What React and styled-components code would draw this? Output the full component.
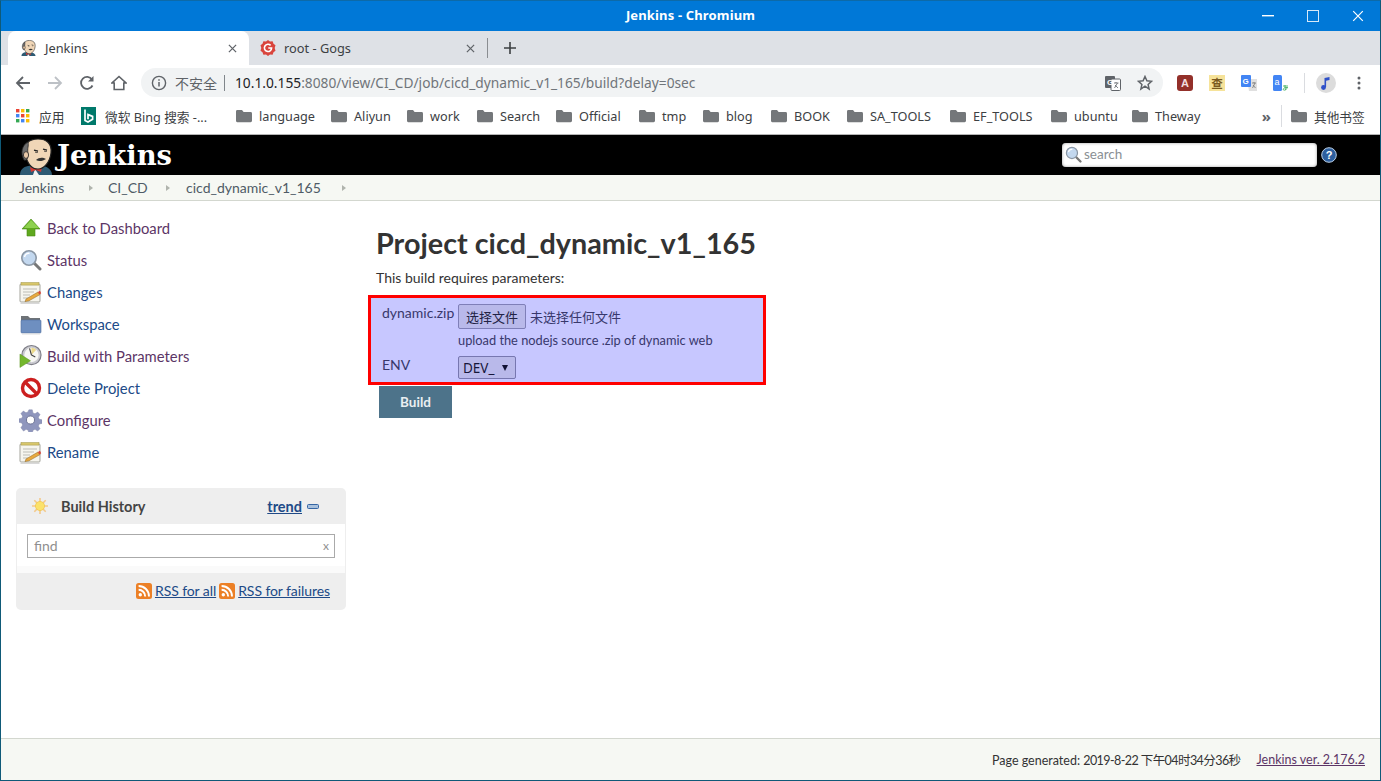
import React from 'react';
import styled, { createGlobalStyle } from 'styled-components';

const GlobalStyle = createGlobalStyle`
  html, body { margin: 0; padding: 0; background: #fff; }
  * { box-sizing: border-box; }
`;

const chromeFont = `"Noto Sans", "Noto Sans CJK SC", sans-serif`;
const pageFont = `Lato, "Noto Sans CJK SC", sans-serif`;

const Win = styled.div`
  width: 1381px;
  height: 781px;
  display: flex;
  flex-direction: column;
  overflow: hidden;
  border: 1px solid #0f5a78;
  border-top-color: #0d6aa8;
`;

const TitleBar = styled.div`
  height: 30px;
  flex: none;
  background: #0078d7;
  color: #fff;
  font: 700 13px ${chromeFont};
  letter-spacing: 0.15px;
  display: flex;
  align-items: center;
  position: relative;
  justify-content: center;
  padding: 0 0 2px 0;
`;

const WinButtons = styled.div`
  position: absolute;
  right: 0;
  top: 0;
  height: 30px;
  display: flex;
  align-items: center;
`;

const WinBtn = styled.div`
  width: 45px;
  display: flex;
  justify-content: center;
`;

const TabStrip = styled.div`
  height: 34px;
  flex: none;
  background: #dee1e6;
  display: flex;
  align-items: stretch;
  padding-left: 7px;
  font: 12.8px ${chromeFont};
  color: #3c4043;
`;

const Tab = styled.div`
  width: ${p => p.$w}px;
  display: flex;
  align-items: center;
  padding: 0 12px 0 ${p => p.$pad}px;
  background: ${p => (p.$active ? '#fff' : 'transparent')};
  border-radius: 8px 8px 0 0;
  gap: ${p => p.$gap}px;
`;

const TabClose = styled.span`
  margin-left: auto;
  display: flex;
`;

const TabSep = styled.div`
  width: 1px;
  height: 20px;
  align-self: center;
  background: #8a8d91;
`;

const NewTab = styled.div`
  width: 44px;
  display: flex;
  align-items: center;
  justify-content: center;
`;

const Toolbar = styled.div`
  height: 32px;
  flex: none;
  display: flex;
  align-items: center;
  padding: 3px 0 0 6px;
`;

const NavBtn = styled.div`
  width: 32px;
  display: flex;
  justify-content: center;
`;

const Omnibox = styled.div`
  margin-left: 6px;
  width: 1022px;
  height: 29px;
  border-radius: 15px;
  background: #f1f3f4;
  display: flex;
  align-items: center;
  padding: 0 8px 0 10px;
  font: 14px ${chromeFont};
  color: #3c4043;
  white-space: nowrap;
`;

const Insecure = styled.span`
  margin-left: 8px;
  color: #5f6368;
`;

const UrlSep = styled.span`
  width: 1px;
  height: 16px;
  background: #80868b;
  margin: 0 10px 0 7px;
`;

const UrlHost = styled.span`
  color: #202124;
  font-size: 13.75px;
`;

const UrlRest = styled.span`
  color: #70757a;
  font-size: 13.75px;
`;

const OmniRight = styled.div`
  margin-left: auto;
  display: flex;
  align-items: center;
  gap: 16px;
  padding-right: 2px;
`;

const Extensions = styled.div`
  display: flex;
  align-items: center;
  margin-left: 14px;
  gap: 16px;
`;

const ExtSep = styled.div`
  width: 1px;
  height: 20px;
  background: #dadce0;
  margin: 0 -1px;
`;

const Avatar = styled.span`
  display: flex;
  margin: 0 5px 0 -4px;
`;

const Bookmarks = styled.div`
  height: 38px;
  flex: none;
  display: flex;
  align-items: center;
  padding: 1px 0 0 15px;
  border-bottom: 1px solid #b4b4b4;
  font: 12.7px ${chromeFont};
  color: #3c4043;
  white-space: nowrap;
`;

const Bookmark = styled.div`
  width: ${p => p.$w}px;
  flex: none;
  display: flex;
  align-items: center;
  gap: ${p => p.$gap || 7}px;
`;

const BookmarkEnd = styled.div`
  margin-left: auto;
  display: flex;
  align-items: center;
  padding-right: 14px;
`;

const More = styled.span`
  font-size: 15px;
  font-weight: 700;
  color: #5f6368;
  margin-right: 10px;
`;

const BookSep = styled.div`
  width: 1px;
  height: 22px;
  background: #dadce0;
  margin-right: 9px;
`;

const JHeader = styled.div`
  height: 40px;
  flex: none;
  background: #000;
  display: flex;
  align-items: flex-end;
  padding-left: 18px;
  overflow: hidden;
`;

const LogoText = styled.span`
  font: 700 27.4px "DejaVu Serif", serif;
  color: #fff;
  align-self: center;
  margin: 0 0 1px 4px;
`;

const SearchWrap = styled.div`
  margin-left: auto;
  align-self: center;
  display: flex;
  align-items: center;
  gap: 4px;
  padding: 0 43px 1px 0;
`;

const SearchBox = styled.div`
  width: 255px;
  height: 24px;
  background: #fff;
  border-radius: 4px;
  box-shadow: inset 0 0 3px #999;
  display: flex;
  align-items: center;
  padding-left: 3px;
  gap: 2px;
  font: 13.5px ${pageFont};
  color: #8a8f94;
`;

const SearchHint = styled.span`
  margin-top: -2px;
`;

const Crumbs = styled.div`
  height: 26px;
  flex: none;
  background: #f6f8f3;
  border-bottom: 1px solid #d3d7cf;
  display: flex;
  align-items: center;
  padding-left: 18px;
  font: 14px ${pageFont};
  color: #4f5b66;
`;

const Crumb = styled.span`
  width: ${p => p.$w}px;
  flex: none;
`;

const CrumbArrow = styled.span`
  width: 0;
  height: 0;
  flex: none;
  border-left: 4px solid #b0b4ad;
  border-top: 3.5px solid transparent;
  border-bottom: 3.5px solid transparent;
  margin-right: ${p => p.$mr}px;
`;

const Body = styled.div`
  flex: 1;
  display: flex;
  min-height: 0;
  font: 14.5px ${pageFont};
  color: #333;
`;

const Side = styled.div`
  width: 358px;
  flex: none;
  padding-top: 11px;
`;

const Task = styled.div`
  height: 32px;
  display: flex;
  align-items: center;
  padding-left: 18px;
  gap: 5px;
  font-size: 14.8px;
  color: ${p => (p.$visited ? '#5c3566' : '#204a87')};
`;

const TaskIcon = styled.span`
  width: 23px;
  height: 24px;
  flex: none;
  display: flex;
  align-items: center;
  justify-content: center;
`;

const History = styled.div`
  margin: 20px 0 0 15px;
  width: 330px;
  height: 122px;
  background: #eee;
  border-radius: 5px;
  display: flex;
  flex-direction: column;
`;

const HistoryHead = styled.div`
  height: 36px;
  flex: none;
  display: flex;
  align-items: center;
  padding: 0 27px 0 16px;
  font-weight: 700;
  font-size: 14.5px;
  color: #444;
`;

const HistoryTitle = styled.span`
  margin-left: 13px;
`;

const Trend = styled.span`
  margin-left: auto;
  color: #204a87;
  text-decoration: underline;
  margin-right: 5px;
`;

const HistoryBody = styled.div`
  height: 49px;
  flex: none;
  background: #fff;
  margin: 0 1px;
  padding: 10px 10px 0;
  border-bottom: 7px solid #fafafa;
`;

const FindBox = styled.div`
  height: 24px;
  border: 1px solid #aaa;
  background: #fff;
  display: flex;
  justify-content: space-between;
  align-items: center;
  padding: 0 5px 2px 6px;
  color: #8f8f8f;
  font-size: 14px;
`;

const FindX = styled.span`
  font-size: 12px;
`;

const HistoryFoot = styled.div`
  flex: 1;
  display: flex;
  align-items: center;
  justify-content: flex-end;
  padding: 0 16px 2px 0;
  gap: 3px;
  font-size: 14px;
  letter-spacing: -0.08px;
  color: #204a87;
`;

const RssLink = styled.span`
  display: flex;
  align-items: center;
  gap: 3px;
  & > span { text-decoration: underline; }
`;

const Main = styled.div`
  flex: 1;
  padding: 25px 0 0 17px;
`;

const Title = styled.h1`
  margin: 0;
  font: 700 28.8px/34px ${pageFont};
  color: #333;
`;

const Lead = styled.p`
  margin: 8px 0 0;
  font-size: 14px;
  line-height: 20px;
`;

const ParamBox = styled.div`
  margin: 7px 0 0 -8px;
  width: 398px;
  height: 90px;
  border: 3px solid #f00;
  background: #c7c7ff;
  padding: 6px 0 0 11px;
  color: #38386c;
  display: grid;
  grid-template-columns: 76px 1fr;
  grid-template-rows: 25px 27px 24px;
  font-size: 14px;
`;

const ParamLabel = styled.div`
  white-space: nowrap;
`;

const FileRow = styled.div`
  display: flex;
  align-items: center;
  gap: 4px;
  font-family: "Noto Sans CJK SC", sans-serif;
  font-size: 13px;
`;

const FileBtn = styled.div`
  width: 68px;
  height: 25px;
  border: 1px solid #7f7fb8;
  border-radius: 2px;
  background: #b9b9ea;
  color: #222244;
  display: flex;
  align-items: center;
  justify-content: center;
  padding-bottom: 1px;
`;

const Hint = styled.div`
  font-size: 12.8px;
  padding-top: 3px;
`;

const Select = styled.div`
  width: 58px;
  height: 23px;
  border: 1px solid #7777b0;
  border-radius: 2px;
  background: #b9b9ea;
  color: #16163a;
  display: flex;
  align-items: center;
  justify-content: space-between;
  padding: 0 5px 0 4px;
  font-family: "Noto Sans", sans-serif;
  font-size: 13.5px;
`;

const SelectArrow = styled.span`
  width: 0;
  height: 0;
  border-top: 6px solid #111133;
  border-left: 3.5px solid transparent;
  border-right: 3.5px solid transparent;
  margin-right: 2px;
`;

const BuildBtn = styled.div`
  margin: 1px 0 0 3px;
  width: 73px;
  height: 32px;
  background: #4d738a;
  color: #e9eef1;
  font-weight: 700;
  font-size: 13.5px;
  display: flex;
  align-items: center;
  justify-content: center;
`;

const Footer = styled.div`
  height: 42px;
  flex: none;
  background: #f6f8f3;
  border-top: 1px solid #d3d7cf;
  display: flex;
  align-items: center;
  justify-content: flex-end;
  padding-right: 15px;
  gap: 16px;
  font: 12.5px ${pageFont};
  color: #333;
`;

const Stamp = styled.span`
  letter-spacing: -0.57px;
`;

const VerLink = styled.span`
  color: #5c3566;
  text-decoration: underline;
`;

/* drawings */

const JenkinsHead = ({ size = 34 }) => (
  <svg width={size} height={size * 1.09} viewBox="0 0 34 37">
    <path d="M1 37c0-5 3-8 8-9l8-1c8 0 16 3 16 10z" fill="#2d5a73" />
    <path d="M14 37l2-6 4 6z" fill="#f2f2f2" />
    <path d="M11 29l6 2 6-2-1 5-5-2-5 2z" fill="#d33833" />
    <path d="M6 16C4 6 10 1 19 1s14 5 13 14c-1 9-7 16-13 16-7 0-11-7-13-15z" fill="#f0d6b7" stroke="#222" strokeWidth="1.2" />
    <path d="M5 22C1 15 3 7 9 4c1 4-1 6 0 12 0 4-1 7-4 6z" fill="#6d6d6d" stroke="#222" strokeWidth=".8" />
    <ellipse cx="7" cy="17" rx="2.6" ry="3.4" fill="#e8c8a8" stroke="#222" strokeWidth=".8" />
    <path d="M15 12l4 1M24 11l4 1" stroke="#222" strokeWidth="1.3" fill="none" />
    <path d="M16 14q2 1 3 0M25 13q2 1 3 0" stroke="#222" strokeWidth=".8" fill="none" />
    <path d="M17 22c3-3 7-3 10-1-3 2-7 3-10 1z" fill="#333" />
  </svg>
);

const Cross = ({ size = 9, color = '#5f6368', w = 1.4 }) => (
  <svg width={size} height={size} viewBox="0 0 10 10">
    <path d="M1 1l8 8M9 1l-8 8" stroke={color} strokeWidth={w} />
  </svg>
);

const GogsIcon = () => (
  <svg width="16" height="16" viewBox="0 0 16 16">
    <path d="M8 0l2 1.5 2.6-.2.9 2.4 2 1.6-.8 2.7.8 2.7-2 1.6-.9 2.4-2.6-.2L8 16l-2-1.5-2.6.2-.9-2.4-2-1.6.8-2.7L.5 5.3l2-1.6.9-2.4 2.6.2z" fill="#d9453d" />
    <path d="M10.6 5.4A3.6 3.6 0 1 0 11.6 8H8.3" fill="none" stroke="#fff" strokeWidth="1.6" />
  </svg>
);

const Folder = () => (
  <svg width="16" height="14" viewBox="0 0 16 14">
    <path d="M1.5 1h4.5l1.6 2h7a1.4 1.4 0 0 1 1.4 1.4v7.4a1.4 1.4 0 0 1-1.4 1.4h-13A1.4 1.4 0 0 1 0 11.8V2.4A1.4 1.4 0 0 1 1.5 1z" fill="#74777a" />
  </svg>
);

const Apps = () => {
  const colors = ['#ea4335', '#fbbc05', '#34a853', '#4285f4', '#ea4335', '#fbbc05', '#34a853', '#4285f4', '#fbbc05'];
  return (
    <svg width="14" height="14" viewBox="0 0 14 14">
      {colors.map((c, i) => (
        <rect key={i} x={(i % 3) * 5} y={Math.floor(i / 3) * 5} width="3.4" height="3.4" fill={c} />
      ))}
    </svg>
  );
};

const BingIcon = () => (
  <svg width="15" height="18" viewBox="0 0 15 18">
    <rect width="15" height="18" fill="#00796b" />
    <path d="M4 2.5v11l3 1.6 4.6-2.8V9.4L7 7.6v4.6" fill="none" stroke="#fff" strokeWidth="1.7" />
  </svg>
);

const UpArrow = () => (
  <svg width="20" height="20" viewBox="0 0 20 20">
    <path d="M10 1L1 11h5v7h8v-7h5z" fill="#5fa81e" stroke="#4a8c16" strokeWidth=".6" />
    <path d="M10 2L3 10h15z" fill="#8ed14f" />
  </svg>
);

const Magnifier = ({ size = 22 }) => (
  <svg width={size} height={size} viewBox="0 0 22 22">
    <path d="M13 13l7 7" stroke="#777" strokeWidth="3" strokeLinecap="round" />
    <circle cx="9" cy="9" r="7.2" fill="#c3d8ef" stroke="#8b97a5" strokeWidth="1.6" />
    <path d="M4.5 8a4.5 4.5 0 0 1 5-3.6" stroke="#fff" strokeWidth="1.5" fill="none" />
  </svg>
);

const Notepad = () => (
  <svg width="23" height="23" viewBox="0 0 23 23">
    <rect x="1" y="3" width="20" height="18" rx="1" fill="#f6f5ee" stroke="#a5a59d" />
    <rect x="1.5" y="22" width="19" height="1" fill="#d8d8d8" />
    <rect x="2" y="1.5" width="18" height="2.6" fill="#d8c66a" stroke="#a09548" strokeWidth=".5" />
    <path d="M4 8h14M4 11h11M4 14h7M4 17h5" stroke="#bdbdb5" />
    <path d="M7 18l12-7 2 2.6-11 6.2-4 .8z" fill="#e8a93f" stroke="#8b6420" strokeWidth=".5" />
    <path d="M19 11l2-1.2 1.2 2.4-1.7 1.3z" fill="#d9483b" />
  </svg>
);

const FolderBlue = () => (
  <svg width="22" height="21" viewBox="0 0 22 21">
    <path d="M1 2h7l2 2h10v4H1z" fill="#6e7377" />
    <rect x="1" y="6" width="20" height="13" rx="1" fill="#6e8fc0" stroke="#51709d" strokeWidth=".6" />
    <rect x="2" y="19.5" width="18" height="1" fill="#dedede" />
  </svg>
);

const BuildIcon = () => (
  <svg width="24" height="24" viewBox="0 0 24 24">
    <circle cx="13" cy="11" r="10" fill="#c9c9cf" stroke="#7d7d86" strokeWidth="1.2" />
    <circle cx="13" cy="11" r="7.5" fill="#f7f7f4" />
    <path d="M13 3.5a7.5 7.5 0 0 1 5 2L13 11z" fill="#ecd98a" />
    <path d="M13 11l-2-7M13 11l4 2" stroke="#444" strokeWidth="1.2" />
    <path d="M1 10l11 7-11 7z" fill="#74b72d" stroke="#5a9220" strokeWidth=".5" />
  </svg>
);

const NoIcon = () => (
  <svg width="22" height="22" viewBox="0 0 22 22">
    <circle cx="11" cy="11" r="8.5" fill="#fff" stroke="#cc1f1f" strokeWidth="3.4" />
    <path d="M5 5l12 12" stroke="#cc1f1f" strokeWidth="3.4" />
  </svg>
);

const Gear = () => (
  <svg width="24" height="24" viewBox="0 0 24 24">
    <path d="M10 0h4l.8 3.6 2.4 1 3.1-2 2.8 2.9-2 3.1 1 2.4 3.6.8v4l-3.6.8-1 2.4 2 3.1-2.8 2.8-3.1-2-2.4 1-.8 3.6h-4l-.8-3.6-2.4-1-3.1 2L.7 20.900l2-3.100-1-2.400L-1.900 14.600v-4l3.600-.8 1-2.400-2-3.100L3.500 1.400l3.100 2 2.400-1z" transform="translate(1.400 1.400) scale(.89)" fill="#8f96bd" stroke="#7a80a3" strokeWidth=".5" />
    <circle cx="12" cy="12" r="4.200" fill="#fff" stroke="#6d7394" />
  </svg>
);

const Sun = () => (
  <svg width="16" height="16" viewBox="0 0 16 16">
    <path d="M8 0v16M0 8h16M2.3 2.3l11.4 11.4M13.700 2.300L2.300 13.700" stroke="#f3c98a" strokeWidth="1.6" />
    <circle cx="8" cy="8" r="4.600" fill="#fbe26b" stroke="#f0c040" strokeWidth=".6" />
  </svg>
);

const Rss = () => (
  <svg width="16" height="16" viewBox="0 0 16 16">
    <rect width="16" height="16" rx="2.5" fill="#ec8026" />
    <circle cx="4.3" cy="11.7" r="1.7" fill="#fff" />
    <path d="M2.6 6.8a6.6 6.6 0 0 1 6.6 6.6M2.6 3a10.4 10.4 0 0 1 10.4 10.4" fill="none" stroke="#fff" strokeWidth="1.9" />
  </svg>
);

const HelpIcon = () => (
  <svg width="16" height="16" viewBox="0 0 16 16">
    <circle cx="8" cy="8" r="7.3" fill="#2d5f9e" stroke="#bcd0e6" strokeWidth="1" />
    <text x="8" y="12" textAnchor="middle" fontFamily="Liberation Sans" fontWeight="700" fontSize="11" fill="#fff">?</text>
  </svg>
);

const MinusIcon = () => (
  <svg width="12" height="7" viewBox="0 0 12 7">
    <rect x=".5" y="1.500" width="11" height="4" rx="1" fill="#a8c0dc" stroke="#3465a4" />
  </svg>
);

const tasks = [
  { label: 'Back to Dashboard', icon: <UpArrow />, visited: true },
  { label: 'Status', icon: <Magnifier />, visited: true },
  { label: 'Changes', icon: <Notepad /> },
  { label: 'Workspace', icon: <FolderBlue /> },
  { label: 'Build with Parameters', icon: <BuildIcon />, visited: true },
  { label: 'Delete Project', icon: <NoIcon /> },
  { label: 'Configure', icon: <Gear />, visited: true },
  { label: 'Rename', icon: <Notepad /> },
];

const bookmarks = [
  ['language', 95], ['Aliyun', 76], ['work', 70], ['Search', 79], ['Official', 83],
  ['tmp', 64], ['blog', 68], ['BOOK', 76], ['SA_TOOLS', 103], ['EF_TOOLS', 101],
  ['ubuntu', 81], ['Theway', 80],
];

export default function App() {
  return (
    <>
      <GlobalStyle />
      <Win>
        <TitleBar>
          Jenkins - Chromium
          <WinButtons>
            <WinBtn>
              <svg width="12" height="2"><rect width="12" height="1.4" fill="#fff" /></svg>
            </WinBtn>
            <WinBtn>
              <svg width="12" height="12"><rect x=".5" y=".5" width="11" height="11" fill="none" stroke="#d7e9f8" /></svg>
            </WinBtn>
            <WinBtn>
              <Cross size={12} color="#fff" w={1} />
            </WinBtn>
          </WinButtons>
        </TitleBar>

        <TabStrip>
          <Tab $w={241} $pad={13} $gap={9} $active>
            <JenkinsHead size={15} />
            <span>Jenkins</span>
            <TabClose><Cross /></TabClose>
          </Tab>
          <Tab $w={238} $pad={11} $gap={8}>
            <GogsIcon />
            <span>root - Gogs</span>
            <TabClose><Cross /></TabClose>
          </Tab>
          <TabSep />
          <NewTab>
            <svg width="12" height="12"><path d="M6 0v12M0 6h12" stroke="#3c4043" strokeWidth="1.6" /></svg>
          </NewTab>
        </TabStrip>

        <Toolbar>
          <NavBtn>
            <svg width="16" height="16" viewBox="0 0 16 16"><path d="M15 8H2M8 2L2 8l6 6" fill="none" stroke="#5f6368" strokeWidth="1.8" /></svg>
          </NavBtn>
          <NavBtn>
            <svg width="16" height="16" viewBox="0 0 16 16"><path d="M1 8h13M8 2l6 6-6 6" fill="none" stroke="#bdc1c6" strokeWidth="1.8" /></svg>
          </NavBtn>
          <NavBtn>
            <svg width="16" height="16" viewBox="0 0 16 16"><path d="M13.5 10.5A6 6 0 1 1 13 4.5" fill="none" stroke="#5f6368" strokeWidth="1.8" /><path d="M14.5 1v5.5H9z" fill="#5f6368" /></svg>
          </NavBtn>
          <NavBtn>
            <svg width="16" height="16" viewBox="0 0 16 16"><path d="M8 1.5L1 8h2.2v6.5h9.6V8H15z" fill="none" stroke="#5f6368" strokeWidth="1.6" /></svg>
          </NavBtn>
          <Omnibox>
            <svg width="16" height="16" viewBox="0 0 16 16">
              <circle cx="8" cy="8" r="6.6" fill="none" stroke="#5f6368" strokeWidth="1.4" />
              <path d="M8 7v4.5M8 4.2v1.5" stroke="#5f6368" strokeWidth="1.5" />
            </svg>
            <Insecure>不安全</Insecure>
            <UrlSep />
            <UrlHost>10.1.0.155</UrlHost>
            <UrlRest>:8080/view/CI_CD/job/cicd_dynamic_v1_165/build?delay=0sec</UrlRest>
            <OmniRight>
              <svg width="16" height="16" viewBox="0 0 16 16">
                <rect y="1" width="10" height="12" rx="1" fill="#5f6368" />
                <rect x="6" y="4" width="9.5" height="11.5" rx="1" fill="#fff" stroke="#5f6368" />
                <text x="2" y="10" fontSize="8" fontWeight="700" fontFamily="Liberation Sans" fill="#fff">G</text>
                <path d="M9 8h4.5M11 7v1M9.5 13l3-5M10 10l3 3" stroke="#5f6368" strokeWidth=".8" fill="none" />
              </svg>
              <svg width="16" height="16" viewBox="0 0 16 16">
                <path d="M8 1.5l1.9 4.3 4.6.5-3.4 3.1 1 4.6L8 11.2l-4.1 2.8 1-4.6L1.5 6.3l4.6-.5z" fill="none" stroke="#5f6368" strokeWidth="1.5" />
              </svg>
            </OmniRight>
          </Omnibox>
          <Extensions>
            <svg width="16" height="16" viewBox="0 0 16 16">
              <rect width="16" height="16" rx="3" fill="#93302a" />
              <text x="8" y="12" textAnchor="middle" fontSize="11" fontWeight="700" fontFamily="Liberation Sans" fill="#f2dede">A</text>
            </svg>
            <svg width="16" height="16" viewBox="0 0 16 16">
              <rect width="16" height="16" fill="#f6e39a" />
              <text x="8" y="12.500" textAnchor="middle" fontSize="11.500" fontWeight="700" fontFamily="Noto Sans CJK SC" fill="#7a5a20">查</text>
            </svg>
            <svg width="16" height="16" viewBox="0 0 16 16">
              <path d="M6 4h10v12H8z" fill="#e0e0e0" />
              <rect y="0" width="10" height="12" rx="1" fill="#4285f4" />
              <text x="1.5" y="9" fontSize="8" fontWeight="700" fontFamily="Liberation Sans" fill="#fff">G</text>
              <path d="M11 8h4M13 7v1M11.5 13l2.5-5M12 10l2.500 3" stroke="#777" strokeWidth=".8" fill="none" />
            </svg>
            <svg width="16" height="16" viewBox="0 0 16 16">
              <rect width="9" height="16" rx="1.5" fill="#4285f4" />
              <text x="1.5" y="10" fontSize="9" fontFamily="Liberation Sans" fill="#fff">a</text>
              <path d="M10 11h5M12 10c0 2 0 3 1 5M14.500 12c-1 3-3 3.500-4 3-1-1 1-3 4-2.500" stroke="#34a853" strokeWidth=".8" fill="none" />
            </svg>
            <ExtSep />
            <Avatar>
              <svg width="20" height="20" viewBox="0 0 20 20">
                <circle cx="10" cy="10" r="10" fill="#dcdcdc" />
                <path d="M8.5 14V5l5-1v3l-3.400.8V14" fill="#2f50c8" />
                <circle cx="7.5" cy="14.5" r="2.4" fill="#2f50c8" />
              </svg>
            </Avatar>
            <svg width="4" height="16" viewBox="0 0 4 16">
              <circle cx="2" cy="3" r="1.5" fill="#5f6368" />
              <circle cx="2" cy="8" r="1.5" fill="#5f6368" />
              <circle cx="2" cy="13" r="1.5" fill="#5f6368" />
            </svg>
          </Extensions>
        </Toolbar>

        <Bookmarks>
          <Bookmark $w={65} $gap={9}><Apps /><span>应用</span></Bookmark>
          <Bookmark $w={155} $gap={9}><BingIcon /><span>微软 Bing 搜索 -...</span></Bookmark>
          {bookmarks.map(([name, w]) => (
            <Bookmark key={name} $w={w}><Folder /><span>{name}</span></Bookmark>
          ))}
          <BookmarkEnd>
            <More>»</More>
            <BookSep />
            <Bookmark $w={75}><Folder /><span>其他书签</span></Bookmark>
          </BookmarkEnd>
        </Bookmarks>

        <JHeader>
          <JenkinsHead />
          <LogoText>Jenkins</LogoText>
          <SearchWrap>
            <SearchBox><Magnifier size={17} /><SearchHint>search</SearchHint></SearchBox>
            <HelpIcon />
          </SearchWrap>
        </JHeader>

        <Crumbs>
          <Crumb $w={70}>Jenkins</Crumb><CrumbArrow $mr={15} />
          <Crumb $w={58}>CI_CD</Crumb><CrumbArrow $mr={16} />
          <Crumb $w={156}>cicd_dynamic_v1_165</Crumb><CrumbArrow $mr={0} />
        </Crumbs>

        <Body>
          <Side>
            {tasks.map(t => (
              <Task key={t.label} $visited={t.visited}>
                <TaskIcon>{t.icon}</TaskIcon>
                {t.label}
              </Task>
            ))}
            <History>
              <HistoryHead>
                <Sun />
                <HistoryTitle>Build History</HistoryTitle>
                <Trend>trend</Trend>
                <MinusIcon />
              </HistoryHead>
              <HistoryBody>
                <FindBox>find<FindX>x</FindX></FindBox>
              </HistoryBody>
              <HistoryFoot>
                <RssLink><Rss /><span>RSS for all</span></RssLink>
                <RssLink><Rss /><span>RSS for failures</span></RssLink>
              </HistoryFoot>
            </History>
          </Side>
          <Main>
            <Title>Project cicd_dynamic_v1_165</Title>
            <Lead>This build requires parameters:</Lead>
            <ParamBox>
              <ParamLabel>dynamic.zip</ParamLabel>
              <FileRow><FileBtn>选择文件</FileBtn>未选择任何文件</FileRow>
              <div />
              <Hint>upload the nodejs source .zip of dynamic web</Hint>
              <ParamLabel>ENV</ParamLabel>
              <Select>DEV_<SelectArrow /></Select>
            </ParamBox>
            <BuildBtn>Build</BuildBtn>
          </Main>
        </Body>

        <Footer>
          <span>Page generated: <Stamp>2019-8-22 下午04时34分36秒</Stamp></span>
          <VerLink>Jenkins ver. 2.176.2</VerLink>
        </Footer>
      </Win>
    </>
  );
}
